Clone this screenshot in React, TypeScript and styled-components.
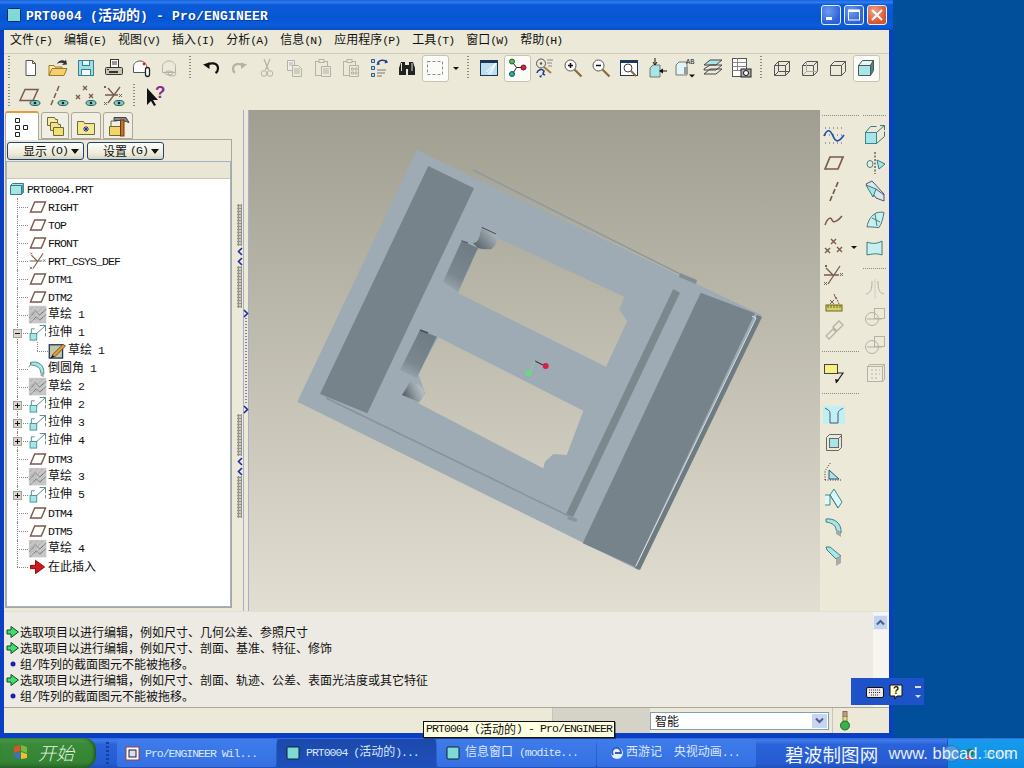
import React from "react";
import styled, { createGlobalStyle } from "styled-components";

const Global = createGlobalStyle`
  html, body { margin: 0; padding: 0; background: #014f9b; overflow: hidden; }
  body { font-family: "Noto Sans CJK SC", "Liberation Sans", sans-serif; font-size: 12px; color: #111; }
  * { box-sizing: border-box; }
`;

const Desktop = styled.div`
  position: relative; width: 1024px; height: 768px; background: #014f9b;
  display: flex; flex-direction: column; overflow: hidden;
`;
const Window = styled.div`
  width: 893px; height: 738px; display: flex; flex-direction: column;
  background: #ece9d8; border: solid #0a3fc4; border-width: 0 4px 5px 4px;
`;
const TitleBar = styled.div`
  height: 30px; margin: 0 -4px; padding: 0 6px 0 7px; display: flex; align-items: center;
  background: linear-gradient(#1a64dc 0, #2c7cf0 8%, #0c5ad8 16%, #0656d2 60%, #0a5cdc 85%, #0a4fc0 100%);
  color: #fff; font-weight: 700; font-size: 14px; line-height: 16px;
  --lat-size: 13px; --lat-ls: 0.2px;
`;
const TitleText = styled.span`margin-left: 5px; white-space: pre; text-shadow: 1px 1px 0 #0a3a9c; flex: 1;`;
const WinButton = styled.div<{ $close?: boolean }>`
  width: 20px; height: 20px; margin-left: 3px; border: 1px solid #e8eefc; border-radius: 3px;
  background: ${(p) => (p.$close ? "radial-gradient(circle at 35% 30%, #f0a48a, #d9532c 70%)" : "radial-gradient(circle at 35% 30%, #6f9cf0, #2b62d8 70%)")};
  display: flex; align-items: center; justify-content: center;
`;
const MenuBar = styled.div`
  height: 24px; display: flex; align-items: center; padding: 0 0 3px 6px; border-bottom: 1px solid #cfccbc;
  white-space: pre;
`;
const MenuItem = styled.span`padding-right: 12px; line-height: 16px;`;
const ToolRow = styled.div`height: 28px; display: flex; align-items: center; margin-left: -1px;`;
const VSep = styled.i`
  width: 2px; height: 24px; margin: 0 6px 0 5px;
  background: repeating-linear-gradient(#8d8b80 0 1px, transparent 1px 3px);
`;
const ToolButton = styled.div`
  width: 28px; height: 28px; display: flex; align-items: center; justify-content: center; flex: none;
`;
const ActiveFace = styled.div`
  width: 27px; height: 27px; display: flex; align-items: center; justify-content: center;
  background: #fbfbf8; border: 1px solid #c6c3b4; border-radius: 3px;
`;
const DropArrow = styled.div<{ $w?: number }>`
  width: ${(p) => p.$w ?? 13}px; height: 28px; display: flex; align-items: center; justify-content: center; flex: none;
  &::after { content: ""; border: 3px solid transparent; border-top: 3px solid #111; border-bottom: 0; }
`;
const Main = styled.div`height: 501px; display: flex;`;
const LeftColumn = styled.div`width: 227px; margin-left: 1px; display: flex; flex-direction: column; flex: none;`;
const Tabs = styled.div`height: 29px; display: flex; gap: 2px; align-items: flex-end;`;
const Tab = styled.div<{ $w: number; $active?: boolean }>`
  width: ${(p) => p.$w}px; height: ${(p) => (p.$active ? 29 : 27)}px; display: flex; align-items: center; justify-content: center;
  margin-bottom: ${(p) => (p.$active ? -1 : 0)}px; position: relative;
  background: ${(p) => (p.$active ? "#fff" : "#f1efe4")};
  border: 1px solid #aca899; border-bottom: ${(p) => (p.$active ? 0 : 1)}px solid #aca899; border-radius: 3px 3px 0 0;
  border-top: ${(p) => (p.$active ? "2px solid #e89a35" : "1px solid #aca899")};
`;
const Panel = styled.div`
  height: 469px; border: 1px solid #aca899; background: #ece9d8; display: flex; flex-direction: column;
`;
const PanelButtons = styled.div`display: flex; gap: 3px; padding: 2px 0 1px 1px; height: 21px;`;
const PanelButton = styled.div`
  width: 77px; height: 18px; display: flex; align-items: center; justify-content: flex-end; gap: 3px; padding: 0 4px 2px 0;
  border: 1px solid #24456b; border-radius: 3px; background: linear-gradient(#fdfdfb, #ece9d8 70%, #d6d2c0); white-space: pre;
  &::after { content: ""; border: 4px solid transparent; border-top: 5px solid #111; border-bottom: 0; margin-top: 2px; }
`;
const TreeBox = styled.div`flex: 1; border: 1px solid #9fb3c4; display: flex; flex-direction: column;`;
const TreeHeader = styled.div`height: 17px; background: #e9e6d6; border-bottom: 1px solid #c9c6b6;`;
const Tree = styled.div`flex: 1; background: #fff; padding-top: 1px;`;
const TreeRowBox = styled.div<{ $level: number; $last?: boolean; $root?: boolean }>`
  position: relative; height: 18px; display: flex; align-items: center; white-space: pre;
  padding-left: ${(p) => (p.$root ? 1 : p.$level * 20)}px;
  &::before {
    content: ${(p) => (p.$root ? "none" : '""')}; position: absolute; left: 10px; top: 0;
    height: ${(p) => (p.$last ? "9px" : "18px")}; border-left: 1px dotted #888;
  }
`;
const TreeLabel = styled.span<{ $cjk: boolean }>`line-height: 16px; padding-bottom: ${(p) => (p.$cjk ? 3 : 1)}px;`;
const Gutter = styled.span<{ $child?: boolean }>`
  position: relative; width: 22px; height: 18px; flex: none;
  &::before { content: ""; position: absolute; left: 10px; right: 1px; top: 9px; border-top: 1px dotted #888; }
  &::after {
    content: ${(p) => (p.$child ? '""' : "none")}; position: absolute; left: 10px; top: 0; height: 9px; border-left: 1px dotted #888;
  }
`;
const Expander = styled.span`
  position: absolute; left: 6px; top: 5px; width: 9px; height: 9px; z-index: 1; background: #d8d6cf; border: 1px solid #a5a298;
  &::before { content: ""; position: absolute; left: 1px; top: 3px; width: 5px; height: 1px; background: #111; }
`;
const ExpanderPlus = styled(Expander)`
  &::after { content: ""; position: absolute; left: 3px; top: 1px; width: 1px; height: 5px; background: #111; }
`;
const TreeIcon = styled.span`width: 17px; height: 18px; flex: none; display: flex; align-items: center; justify-content: center; margin-right: 2px;`;
const Sash = styled.div`width: 17px; flex: none; display: flex; padding-left: 4px;`;
const GripColumn = styled.div`width: 7px; margin-right: 0; display: flex; flex-direction: column; align-items: center; padding-top: 94px;`;
const Grip = styled.div`
  width: 5px; height: 42px; background-color: #cfccc0;
  background-image: radial-gradient(#96948a 1px, transparent 1.2px); background-size: 3px 3px;
`;
const Chevron = styled.span`
  height: 10px; width: 7px; display: flex; align-items: center; justify-content: center; flex: none;
`;
const GripGap = styled.div`height: 106px;`;
const LineColumn = styled.div`
  width: 6px; border-left: 1px solid #a9aecb; border-right: 1px solid #a9aecb; display: flex; flex-direction: column; align-items: center; padding-top: 198px;
`;
const DotLine = styled.div`
  width: 2px; height: 86px; background: repeating-linear-gradient(#7b7fa8 0 1px, transparent 1px 3px);
`;
const Canvas = styled.div`
  flex: none; width: 571px; height: 501px;
  background: linear-gradient(#a09e90, #e2dfd2);
`;
const ModelSvg = styled.svg`display: block; width: 100%; height: 100%;`;
const SideBar = styled.div`flex: 1; display: flex; background: #ece9d8;`;
const SideCol = styled.div<{ $w: number }>`width: ${(p) => p.$w}px; display: flex; flex-direction: column;`;
const SideRow = styled.div`height: 28px; display: flex; align-items: center;`;
const HSep = styled.div<{ $h: number }>`
  height: ${(p) => p.$h}px; flex: none; display: flex; align-items: center; padding: 0 2px;
  &::after { content: ""; width: 100%; height: 1px; background: repeating-linear-gradient(90deg, #8d8b80 0 1px, transparent 1px 2px); }
`;
const MessageArea = styled.div`height: 96px; display: flex; background: #eceae2; border-top: 1px solid #e3e0d3;`;
const Messages = styled.div`flex: 1; padding-top: 12px;`;
const MessageLine = styled.div`height: 16px; display: flex; align-items: center; white-space: pre; padding-left: 2px; line-height: 16px;`;
const MessageIcon = styled.span`width: 14px; height: 16px; flex: none; display: flex; align-items: center; justify-content: center;`;
const ScrollTrack = styled.div`width: 16px; background: #f6f5ef; padding-top: 3px;`;
const ScrollUp = styled.div`
  width: 15px; height: 15px; background: #c3d3f0; border: 1px solid #e8eefb; display: flex; align-items: center; justify-content: center;
`;
const StatusBar = styled.div`height: 26px; display: flex; align-items: center; border-top: 1px solid #aca899;`;
const StatusBlank = styled.div`width: 549px; height: 100%; border-right: 1px solid #c8c5b5;`;
const StatusGrey = styled.div`width: 97px; height: 100%; background: #d5d2c8;`;
const Combo = styled.div`
  width: 179px; height: 18px; display: flex; align-items: center; justify-content: space-between; padding: 0 1px 0 4px;
  background: #fff; border: 1px solid #7f9db9; line-height: 16px;
`;
const ComboArrow = styled.span`
  width: 15px; height: 14px; background: #c5d5f2; display: flex; align-items: center; justify-content: center; border-radius: 1px;
`;
const StatusSep = styled.i`width: 1px; height: 100%; margin-left: 3px; background: #c8c5b5;`;
const Light = styled.div`width: 24px; display: flex; justify-content: center;`;

const Taskbar = styled.div`
  height: 30px; display: flex; align-items: stretch; position: relative;
  background: linear-gradient(#2f68dc 0, #3f7bea 8%, #2a62d9 22%, #265cd2 85%, #1f4fb8 100%);
`;
const StartButton = styled.div`
  width: 96px; display: flex; align-items: center; padding: 0 0 2px 11px; gap: 7px; border-radius: 0 12px 12px 0;
  background: linear-gradient(#4c9a4c, #3a8a3a 20%, #348434 80%, #2a6a2a);
  color: #e9f5e4; font-style: italic; font-size: 18px; font-weight: 300; box-shadow: inset -2px 0 3px #1f5a1f;
`;
const TaskGrip = styled.i`
  width: 3px; margin: 4px 8px 4px 10px;
  background: repeating-linear-gradient(#173f9c 0 2px, transparent 2px 4px);
`;
const TaskButton = styled.div<{ $active?: boolean; $w: number; $pad: number; $gap: number }>`
  width: ${(p) => p.$w}px; margin: 1px 1px 1px 0; padding-left: ${(p) => p.$pad}px; gap: ${(p) => p.$gap}px;
  display: flex; align-items: center; white-space: pre; border-radius: 2px; overflow: hidden;
  color: #dbe6ff; --lat-ls: -1px;
  background: ${(p) => (p.$active ? "linear-gradient(#1c49ac, #1e50ba)" : "linear-gradient(#3f7cea, #3470e2)")};
`;
const TaskLabel = styled.span<{ $cjk?: boolean }>`line-height: 16px; padding-bottom: ${(p) => (p.$cjk ? 3 : 1)}px;`;
const Tray = styled.div`
  position: absolute; right: 0; top: 1px; bottom: 0; width: 77px; padding: 0 14px 0 0;
  display: flex; justify-content: space-between; align-items: center;
  background: linear-gradient(#189bec, #0e8ce4); color: #8fcff6; font-size: 11px;
  font-family: "Liberation Sans", sans-serif; border-left: 1px solid #0a5fb8;
`;
const TrayIcons = styled.span`display: flex; align-items: center; gap: 3px; margin-left: -5px;`;
const Watermark = styled.div`
  position: absolute; left: 785px; top: 2px; height: 27px; display: flex; align-items: center; color: #f2f5fb; white-space: pre;
`;
const WatermarkCn = styled.span`font-size: 18.5px; letter-spacing: 0.2px; margin-right: 10px; font-weight: 400;`;
const WatermarkEn = styled.span`font-family: "Liberation Sans", sans-serif; font-size: 16.5px; color: #e8edf6;`;
const Tooltip = styled.div`
  position: absolute; left: 423px; top: 721px; width: 192px; height: 17px; background: #ffffe1; border: 1px solid #111;
  display: flex; align-items: center; padding: 0 0 2px 2px; white-space: pre; z-index: 5; box-shadow: 1px 1px 0 #0006; line-height: 15px;
`;
const ImeBar = styled.div`
  position: absolute; left: 851px; top: 678px; width: 73px; height: 27px; z-index: 5; background: #1d52c9;
  display: flex; align-items: center;
`;
const ImeGrip = styled.i`
  width: 3px; height: 21px; margin: 0 11px 0 3px; background: repeating-linear-gradient(#0e2f8a 0 2px, transparent 2px 4px);
`;
const ImeSlot = styled.span<{ $w: number }>`width: ${(p) => p.$w}px; display: flex; justify-content: center; flex: none;`;

const Lat = styled.span`
  font-family: "Liberation Mono", monospace; font-size: var(--lat-size, 11.5px); letter-spacing: var(--lat-ls, -0.9px);
`;
const Ico = styled.svg`display: block; flex: none;`;

function T({ s }: { s: string }) {
  const parts = s.split(/([\x00-\x7f]+)/).filter(Boolean);
  return (
    <>
      {parts.map((p, i) => (/^[\x00-\x7f]/.test(p) ? <Lat key={i}>{p}</Lat> : <span key={i}>{p}</span>))}
    </>
  );
}

const B = "#7c5a49";
const Gy = "#b4b1a6";
const Cy = "#a6e6e8";
const HatchDefs = () => null;
const I: Record<string, React.ReactNode> = {
  new: <><path d="M8 4.500h6.500l3 3v12h-9.500z" fill="#fff" stroke="#555" /><path d="M14.500 4.500v3h3" stroke="#555" /></>,
  open: <><path d="M3 19.500v-10h5l1 1.500h7v2" fill="#fbe9a8" stroke="#9a7a20" /><path d="M3 19.500l3-7h15l-3 7z" fill="#f6cf6c" stroke="#9a7a20" /><path d="M11 8c1-3 5-5 8-3l1-1.500 1 5-5 .5 1.800-1.800c-2-1-5-.5-6.800.8z" fill="#333" /></>,
  save: <><rect x="4.500" y="4.500" width="15" height="15" fill="#9adfe4" stroke="#3a7f9a" /><rect x="8.500" y="4.500" width="7" height="5" fill="#e8f8f8" stroke="#3a7f9a" /><rect x="7.500" y="13.500" width="9" height="6" fill="#f4fbfb" stroke="#3a7f9a" /></>,
  print: <><rect x="8.500" y="3.500" width="8" height="8" fill="#fff" stroke="#333" /><path d="M10 6h5M10 8h5" stroke="#333" /><rect x="3.500" y="11.500" width="17" height="7" rx="1" fill="#c9c6b8" stroke="#333" /><rect x="7" y="15" width="9" height="2" fill="#333" /><rect x="5" y="13" width="2" height="1" fill="#333" /></>,
  mail: <><path d="M3.500 16.500v-6c0-3 3-5.500 6.500-5.500 3.500 0 6.500 2.500 6.500 5.500v6z" fill="#fff" stroke="#555" /><circle cx="14" cy="8" r="1.400" fill="#d22" /><rect x="15.500" y="11.500" width="4" height="9" rx="2" fill="#fff" stroke="#222" strokeWidth="1.300" /></>,
  maild: <><path d="M4.500 16.500v-6c0-3 3-5.500 6.500-5.500 3.500 0 6.500 2.500 6.500 5.500v6z" stroke={Gy} /><ellipse cx="14" cy="18" rx="4" ry="2" stroke={Gy} /><ellipse cx="11" cy="17" rx="4" ry="2" stroke={Gy} /></>,
  undo: <><path d="M7 9.500c4-3.500 12-3 12 3 0 2-1 3.500-2.500 4.500" stroke="#111" strokeWidth="2.200" /><path d="M4 8.500l6.500-2v6.500z" fill="#111" /></>,
  redo: <><path d="M17 10c-4-3-11-3-11 3 0 1.500.7 2.800 2 3.800" stroke={Gy} strokeWidth="2.200" /><path d="M20 8.500l-6-2v6.500z" fill={Gy} /></>,
  cut: <><path d="M9 3l4.500 11M15 3l-4.500 11" stroke={Gy} strokeWidth="1.200" /><circle cx="9" cy="17.500" r="2.800" stroke={Gy} /><circle cx="15" cy="17.500" r="2.800" stroke={Gy} /></>,
  copy: <><path d="M4.500 4.500h7v10h-7z" fill="#eee" stroke={Gy} /><path d="M6 7h4M6 9h4" stroke={Gy} /><path d="M9.500 9.500h6l3 3v8h-9z" fill="#ece9d8" stroke={Gy} /><path d="M11 13h6M11 15h6M11 17h6" stroke={Gy} /></>,
  paste: <><rect x="4.500" y="5.500" width="12" height="14" stroke={Gy} /><rect x="8" y="3.500" width="5" height="3" fill="#ece9d8" stroke={Gy} /><path d="M10.500 10.500h9v10h-9z" fill="#ece9d8" stroke={Gy} /><path d="M12 13h6M12 15h6M12 17h6" stroke={Gy} /></>,
  pastes: <><rect x="4.500" y="5.500" width="12" height="14" stroke={Gy} /><rect x="8" y="3.500" width="5" height="3" fill="#ece9d8" stroke={Gy} /><path d="M10.500 9.500h9v11h-9z" fill="#ece9d8" stroke={Gy} /><path d="M12.500 12h2v2h-2zM16 12h2v2h-2zM12.500 16h2v2h-2zM16 16h2v2h-2z" stroke={Gy} /></>,
  regen: <><path d="M4.500 3.500h3v3h-3zM4.500 10.500h3v3h-3zM4.500 17.500h3v3h-3z" fill={Cy} stroke="#2a5a8a" /><path d="M10 14h9M10 17h8M10 20h5" stroke="#777" /><path d="M11 7c1-3 6-4 9-1" stroke="#1d3e8c" strokeWidth="1.500" /><path d="M19 3.500l2 3-3.500 1zM11 5l-1.500 4 3.500-.5z" fill="#1d3e8c" /></>,
  find: <><path d="M4 12l2-6h4v3h4v-3h4l2 6v7h-7v-6h-2v6h-7z" fill="#222" /><path d="M6.500 7v8M17 7v8" stroke="#ddd" /></>,
  box: <path d="M4.500 5.500h15v13h-15z" stroke="#8d8c86" strokeDasharray="3 2" />,
  view: <><rect x="3.500" y="4.500" width="17" height="15" fill="#bcdff0" stroke="#1d3558" /><rect x="3" y="4" width="18" height="3" fill="#1d3558" /><path d="M19 7l-8 11M19 7l-10 9M19 7l-6 12" stroke="#fff" /></>,
  csysv: <><circle cx="7" cy="5.500" r="2.500" fill="#58b85a" stroke="#2a5a3a" /><circle cx="7" cy="18" r="2.500" fill="#38a8a0" stroke="#1a5a5a" /><circle cx="18.500" cy="11.500" r="2.500" fill="#c82640" stroke="#701a2a" /><path d="M8.500 7.500l3 4-3 5M11.500 11.500h5" stroke="#222" /></>,
  spin: <><circle cx="8" cy="7.500" r="4.500" stroke="#555" /><circle cx="8" cy="7.500" r="1.200" fill="#555" /><path d="M14 4h6M14 7h5M15 10h4" stroke="#888" /><path d="M11 11l7 6" stroke="#a67c3c" strokeWidth="2" /><path d="M4 17a4 4 0 0 1 7-2l-1 3 2 1" stroke="#1d3e8c" strokeWidth="1.600" /><path d="M6 20l2 2 1-3z" fill="#1d3e8c" /></>,
  zin: <><circle cx="9.500" cy="9.500" r="5.500" fill="#fff" stroke="#555" /><path d="M7 9.500h5M9.500 7v5" stroke="#111" strokeWidth="1.500" /><path d="M13.500 13.500l7 7" stroke="#8a6a3a" strokeWidth="2.200" /></>,
  zout: <><circle cx="9.500" cy="9.500" r="5.500" fill="#fff" stroke="#555" /><path d="M7 9.500h5" stroke="#111" strokeWidth="1.500" /><path d="M13.500 13.500l7 7" stroke="#8a6a3a" strokeWidth="2.200" /></>,
  refit: <><rect x="3.500" y="4.500" width="17" height="15" fill="#fff" stroke="#1d3558" /><rect x="3" y="4" width="18" height="3" fill="#1d3558" /><circle cx="11" cy="12" r="4" stroke="#444" /><path d="M14 15l5 5" stroke="#8a6a3a" strokeWidth="2" /></>,
  orient: <><path d="M5 21v-9l3-3h7v12z" fill={Cy} stroke="#777" /><path d="M10 2v6M8 6l2 3 2-3" stroke="#111" /><path d="M15 15h7" stroke="#111" /><path d="M14 15l4-2.500v5z" fill="#111" /></>,
  saved: <><path d="M3 19v-10l3-3h8v13z" fill="#e2f6f6" stroke="#777" /><rect x="11" y="11" width="4" height="7" fill="#999" /><text x="13" y="8" fontSize="7" fontFamily="Liberation Mono" fill="#222">AB</text><path d="M16 18.500h6l-3 3z" fill="#111" /></>,
  layers: <><path d="M3 9l6-5h12l-6 5z" fill={Cy} stroke="#444" /><path d="M3 13l6-4h12l-6 5h-12zM3 18l6-5h12l-6 5z" stroke="#444" /></>,
  setup: <><rect x="3.500" y="2.500" width="14" height="18" fill="#fff" stroke="#555" /><path d="M3.500 6.500h14M3.500 10.500h14M3.500 14.500h10M8.500 2.500v12" stroke="#888" /><rect x="12" y="13" width="10" height="8" fill="#aaa" stroke="#222" /><circle cx="17" cy="17" r="2.500" fill="#fff" stroke="#111" /></>,
  cube1: <><path d="M4.500 9.500h11v10h-11zM8.500 5.500h11v10h-11zM4.500 9.500l4-4M15.500 9.500l4-4M4.500 19.500l4-4M15.500 19.500l4-4" stroke="#555" /></>,
  cube2: <><path d="M4.500 9.500h11v10h-11zM15.500 9.500l4-4v10l-4 4M4.500 9.500l4-4h11" stroke="#555" /><path d="M8.500 5.500v10h11M4.500 19.500l4-4" stroke="#aaa" /></>,
  cube3: <><path d="M4.500 9.500h11v10h-11zM15.500 9.500l4-4v10l-4 4M4.500 9.500l4-4h11" stroke="#555" /></>,
  cube4: <><path d="M4.500 9.500h12v10h-12z" fill={Cy} stroke="#555" /><path d="M4.500 9.500l4-5h11l-3 5z" fill="#dff7f7" stroke="#555" /><path d="M16.500 9.500l3-5v10l-3 5z" fill="#3f8f80" stroke="#555" /></>,
  planev: <><path d="M2 16.500l5-11h13l-5 11z" stroke={B} strokeWidth="1.500" /><ellipse cx="17" cy="19" rx="5" ry="2.500" fill="#7fd0c0" stroke="#2a5a5a" /><circle cx="17" cy="19" r="1.300" fill="#123" /></>,
  axisv: <><path d="M13 2l-2 5M10 9l-2 5M7 16l-2 5" stroke={B} strokeWidth="1.500" /><ellipse cx="17" cy="19" rx="5" ry="2.500" fill="#7fd0c0" stroke="#2a5a5a" /><circle cx="17" cy="19" r="1.300" fill="#123" /></>,
  pointv: <><path d="M9 2l4 4M13 2l-4 4M2 11l4 4M6 11l-4 4M15 10l4 4M19 10l-4 4" stroke={B} strokeWidth="1.300" /><ellipse cx="17" cy="19" rx="5" ry="2.500" fill="#7fd0c0" stroke="#2a5a5a" /><circle cx="17" cy="19" r="1.300" fill="#123" /></>,
  csysvv: <><path d="M6 4l6 7M18 3l-6 8-6 8M3 11h13" stroke={B} strokeWidth="1.300" /><path d="M17 10l3 3M20 10l-3 3M2 2l2 2M4 2l-2 2M2 18l3 3M5 18l-3 3" stroke="#666" /><ellipse cx="17" cy="19" rx="5" ry="2.500" fill="#7fd0c0" stroke="#2a5a5a" /><circle cx="17" cy="19" r="1.300" fill="#123" /></>,
  help: <><path d="M4 4l0 17 4-4 3 5 2-1-3-5 5 0z" fill="#111" /><text x="12" y="14" fontSize="17" fontWeight="700" fill="#8a2a8a" fontFamily="Liberation Sans">?</text></>,
  tabtree: <><path d="M5.500 3.500h4v4h-4zM5.500 10.500h4v4h-4zM5.500 17.500h4v4h-4zM13.500 10.500h4v4h-4z" fill="#fff" stroke="#222" /></>,
  tabfold: <><path d="M4.500 3.500h7l1 2h2v6h-10z" fill="#fbe9a8" stroke="#6a6a40" /><path d="M7.500 8.500h7l1 2h2v6h-10z" fill="#f6e08a" stroke="#6a6a40" /><path d="M10.500 13.500h10v8h-10z" fill="#f3e070" stroke="#6a6a40" /></>,
  tabfav: <><path d="M3.500 7.500h6l1 2h10v11h-17z" fill="#f5e690" stroke="#6a6a40" /><path d="M12 12v6M9 15h6M10 13l4 4M14 13l-4 4" stroke="#1d2e9c" /></>,
  tabtool: <><path d="M3.500 12.500h13v9h-13z" fill="#f3d665" stroke="#6a6a40" /><path d="M5 12V7h6" stroke="#6a6a40" /><path d="M8 3.500h12l3 5-6-2h-9z" fill="#888" stroke="#444" /><rect x="14.500" y="6" width="3.500" height="16" fill="#c4742a" stroke="#6a3a10" /></>,
  plane: <path d="M3 18l5-12h13l-5 12z" stroke={B} strokeWidth="1.700" />,
  csys: <><path d="M4 5l7 7M18 3l-6 9-6 9M2 12h15" stroke={B} strokeWidth="1.300" /><path d="M3 2l2 2M5 2l-2 2M2 19l3 3M5 19l-3 3M18 10l3 3M21 10l-3 3" stroke="#666" /></>,
  sketch: <><rect x="1" y="1" width="21" height="21" fill="#c6c6c6" /><path d="M2 6l4-4M2 12l10-10M3 17l15-15M8 18l13-13M14 19l7-7" stroke="#8e8e8e" strokeDasharray="1 1" /><path d="M2 15l7-8 5 5 8-7M3 21l7-7 4 4 7-6" stroke="#333" strokeDasharray="1 1" /></>,
  extrude: <><rect x="2.500" y="12.500" width="8" height="8" fill={Cy} stroke="#3a8a8a" /><path d="M4 12V7h4M14 3h7v7M10 13L21 3M21 12v4" stroke="#3a7a7a" /></>,
  sketchE: <><rect x="1.500" y="4.500" width="16" height="16" fill="#bfc7a8" stroke="#1d2e5a" strokeWidth="1.500" /><path d="M5 17l13-13 3 2-13 13z" fill="#e8a03a" stroke="#5a3a10" /><path d="M3 21l2-4 3 2z" fill="#111" /></>,
  round: <><path d="M3 4c9-2 17 3 16 14l-4-2c0-5-3-8-12-9z" fill={Cy} stroke="#3a7a7a" /><path d="M1 10l3-5" stroke="#777" /><path d="M15 16l4 2 0 4-4-2z" fill="#aaa" /></>,
  insert: <path d="M3 10h6V4l11 8-11 8v-6H3z" fill="#d01820" stroke="#700" />,
  wave: <><path d="M3 5h18M3 20h18M3 12h18" stroke="#556" strokeDasharray="1 3" /><path d="M2 13c3-7 6-7 9 0s6 6 11-1" stroke="#2050b0" strokeWidth="1.700" /></>,
  axis: <path d="M16 3l-2 5M13 10l-2 5M10 17l-2 5" stroke={B} strokeWidth="1.700" />,
  curve: <path d="M3 18c3-8 6-8 7-5s5 2 10-4" stroke={B} strokeWidth="1.500" />,
  points: <path d="M9 4l5 5M14 4l-5 5M3 13l5 5M8 13l-5 5M15 12l5 5M20 12l-5 5" stroke={B} strokeWidth="1.400" />,
  offset: <><path d="M12 3l2 5M8 9l4 4M12 9l-4 4" stroke={B} /><path d="M14 6l3 7" stroke={B} strokeDasharray="2 1" /><rect x="4" y="14" width="16" height="6" fill="#d8d060" stroke="#6a6a20" /><path d="M6 14v3M9 14v3M12 14v3M15 14v3M18 14v3" stroke="#6a6a20" /></>,
  chain: <path d="M4 17l7-7 3 3-7 7zM11 8l6-6 4 4-6 6z" stroke={Gy} strokeWidth="1.300" />,
  note: <><rect x="2.500" y="4.500" width="13" height="9" fill="#f8f080" stroke="#444" /><path d="M15 13h6l-7 10" stroke="#222" strokeWidth="1.200" /><path d="M14 23l-1-4 4 1z" fill="#111" /></>,
  extr2: <><rect x="2.500" y="9.500" width="11" height="11" fill={Cy} stroke="#3a8a8a" /><path d="M2.500 9.500l5-6h6M13.500 9.500l8-7M13.500 20.500l8-7v-5M17 2.500h4.500v4.500" stroke="#3a7a7a" /></>,
  revolve: <><path d="M12 1v22" stroke="#222" strokeDasharray="2 1.500" /><ellipse cx="7" cy="13" rx="3" ry="3.500" stroke="#3a8a8a" /><path d="M14 9l8 4-6 5z" fill={Cy} stroke="#3a7a7a" /></>,
  sweep: <><path d="M3 5l6-3 12 13v7l-8-3z" fill="#d8e8ee" stroke="#556" /><path d="M3 6l10 4-3 8z" fill={Cy} stroke="#3a7a7a" /><path d="M13 10l8 6" stroke="#556" /></>,
  blend: <><path d="M4 20c1-7 5-12 9-14 3-1 6-1 8-.5-1 5-2 11-5 15-4 0-8-1-12-.5z" fill="#c7eef0" stroke="#4a7a7a" /><path d="M9 11l8 4M12 7l2 12" stroke="#4a7a7a" /></>,
  bound: <path d="M4 7c5 2 10 2 15-1v14c-5-2-10-1-15 0z" fill="#c7eef0" stroke="#3a7a7a" />,
  mirror: <><path d="M12 2v20" stroke="#ccc" /><path d="M9 4c0 8-1 12-6 13M15 4c0 8 1 12 6 13" stroke={Gy} /></>,
  merge: <><rect x="11.500" y="3.500" width="10" height="10" stroke={Gy} /><circle cx="9" cy="14" r="6.500" stroke={Gy} /><path d="M4 14h15" stroke={Gy} /></>,
  pattern: <><rect x="4.500" y="5.500" width="15" height="15" stroke={Gy} fill="#eeebdd" /><path d="M19.500 5.500l2-2h-15l-2 2M19.500 20.500l2-2v-15" stroke={Gy} /><path d="M8 9h2M12 9h2M16 9h1M8 13h2M12 13h2M16 13h1M8 17h2M12 17h2" stroke={Gy} /></>,
  uhole: <><rect x="1" y="3" width="22" height="18" fill="#bff0f4" /><path d="M3 5c3 2 5 2 5 6v9h8v-9c0-4 3-4 5-6" stroke="#556" fill="none" /></>,
  shell: <><path d="M4.500 6.500l3-3h12v13l-3 3h-12z" stroke="#666" /><rect x="7.500" y="7.500" width="9" height="9" fill={Cy} stroke="#666" /><path d="M16.500 7.500l3-3" stroke="#666" /></>,
  draft: <><path d="M3 21h16M3 21v-9l6-9" stroke="#333" strokeDasharray="1 1.500" /><path d="M7 11l10 9h-10z" fill={Cy} stroke="#356" /></>,
  rib: <><path d="M3 8h5v10h-5M8 8l4-6 8 13-4 6z" fill="#dff7f7" stroke="#3a8a8a" /><path d="M8 8l8 13" stroke="#3a8a8a" /></>,
  fillet: <><path d="M4 4c8-1 16 4 15 14l-5-3c0-4-3-7-10-8z" fill={Cy} stroke="#4a7a7a" /><path d="M14 15l5 3v4l-5-3z" fill="#aaa" /></>,
  chamfer: <><path d="M4 4h4l11 9-5 3-9-9z" fill={Cy} stroke="#4a7a7a" /><path d="M14 16l5-3v7l-5 3z" fill="#aaa" /></>,
};

function Icon({ n, size = 24 }: { n: string; size?: number }) {
  return <Ico width={size} height={size} viewBox="0 0 24 24" fill="none">{I[n]}</Ico>;
}
const Tool = ({ n, active }: { n: string; active?: boolean }) => (
  <ToolButton>{active ? <ActiveFace><Icon n={n} /></ActiveFace> : <Icon n={n} />}</ToolButton>
);
const SChev = ({ right }: { right?: boolean }) => (
  <Chevron>
    <Ico width="6" height="9" viewBox="0 0 6 9" fill="none">
      <path d={right ? "M1 1l3.500 3.500-3.500 3.500" : "M5 1L1.500 4.500 5 8"} stroke="#1c2f9c" strokeWidth="1.600" />
    </Ico>
  </Chevron>
);

type Row = { t: string; i: string; lvl?: number; ex?: "p" | "m" };
const rows: Row[] = [
  { t: "RIGHT", i: "plane" }, { t: "TOP", i: "plane" }, { t: "FRONT", i: "plane" }, { t: "PRT_CSYS_DEF", i: "csys" },
  { t: "DTM1", i: "plane" }, { t: "DTM2", i: "plane" }, { t: "草绘 1", i: "sketch" },
  { t: "拉伸 1", i: "extrude", ex: "m" }, { t: "草绘 1", i: "sketchE", lvl: 1 }, { t: "倒圆角 1", i: "round" },
  { t: "草绘 2", i: "sketch" }, { t: "拉伸 2", i: "extrude", ex: "p" }, { t: "拉伸 3", i: "extrude", ex: "p" },
  { t: "拉伸 4", i: "extrude", ex: "p" }, { t: "DTM3", i: "plane" }, { t: "草绘 3", i: "sketch" },
  { t: "拉伸 5", i: "extrude", ex: "p" }, { t: "DTM4", i: "plane" }, { t: "DTM5", i: "plane" },
  { t: "草绘 4", i: "sketch" }, { t: "在此插入", i: "insert" },
];
const menus = ["文件(F)", "编辑(E)", "视图(V)", "插入(I)", "分析(A)", "信息(N)", "应用程序(P)", "工具(T)", "窗口(W)", "帮助(H)"];
const msg1 = "选取项目以进行编辑，例如尺寸、几何公差、参照尺寸";
const msg2 = "选取项目以进行编辑，例如尺寸、剖面、基准、特征、修饰";
const msg3 = "组/阵列的截面图元不能被拖移。";
const msg4 = "选取项目以进行编辑，例如尺寸、剖面、轨迹、公差、表面光洁度或其它特征";
const messages: [boolean, string][] = [[true, msg1], [true, msg2], [false, msg3], [true, msg4], [false, msg3]];

const GreenArrow = () => (
  <Ico width="14" height="14" viewBox="0 0 14 14">
    <path d="M1 5h1l0 0 3 0V1.500L12.500 7 5 12.500V9H1z" fill="#3ee06a" stroke="#0c4a2a" />
  </Ico>
);
const BlueDot = () => (
  <Ico width="6" height="6" viewBox="0 0 6 6"><circle cx="3" cy="3" r="2.500" fill="#1420b0" /></Ico>
);
const TaskCube = () => (
  <Ico width="14" height="14" viewBox="0 0 14 14">
    <rect x="1" y="1" width="12" height="12" rx="1" fill="#7fdad6" stroke="#123" />
  </Ico>
);

function Model() {
  const plate =
    "M416.700 150L761.700 315L638.300 570L297.300 401.700Z " +
    "M498.300 238.300L624.300 296.700L619.300 310L627.300 321L606 366.700L458.300 293.300L476.700 250L490 248.300Z " +
    "M438.300 337.300L583.300 410.700L566.700 455L553.300 454L545 461.700L543.300 468.300L418.300 403.300L425 393.300L418.300 373.300Z";
  return (
    <ModelSvg viewBox="249 110 571 501">
      <defs>
        <linearGradient id="cyl" x1="0" y1="1" x2="1" y2="0.200">
          <stop offset="0" stopColor="#4e585e" />
          <stop offset="0.500" stopColor="#7e8a91" />
          <stop offset="1" stopColor="#b5bdc3" />
        </linearGradient>
        <linearGradient id="cyl2" x1="0" y1="0.700" x2="1" y2="0.300">
          <stop offset="0" stopColor="#4e585e" />
          <stop offset="0.600" stopColor="#97a2a9" />
          <stop offset="1" stopColor="#bfc7cc" />
        </linearGradient>
        <linearGradient id="wall" x1="0.700" y1="0" x2="0.300" y2="1">
          <stop offset="0" stopColor="#6f7b82" />
          <stop offset="0.700" stopColor="#7b878e" />
          <stop offset="1" stopColor="#9aa6ae" />
        </linearGradient>
      </defs>
      <path d={plate} fill="#9eabb4" fillRule="evenodd" />
      <path d="M428.300 166L474 188.300L367.300 413.300L320 394Z" fill="#77838a" />
      <path d="M700.700 292.700L755 313.300L635 566.700L582.700 543.300Z" fill="#77838a" />
      <path d="M757 315L762 317L640 570L635 568Z" fill="#6f7b82" />
      <path d="M752 316L756 318L636 566" stroke="#dfe4e6" strokeWidth="1" fill="none" />
      <path d="M673.300 289L680 292.700L573.300 516.700L566 514Z" fill="#7b888e" />
      <path d="M461.700 240.700L478 248L458 291.700L443 281.700Z" fill="url(#wall)" />
      <path d="M420 330L436.700 336.700L416.700 378.300L400 370Z" fill="url(#wall)" />
      <path d="M481.700 227.300L496 234Q499 243 491.700 249Q484 250 478 248L473 243Q477 243 479 238Z" fill="url(#cyl)" />
      <path d="M481.700 227.300L496 234M461.700 240.700L468 243" stroke="#454e54" strokeWidth="1" fill="none" />
      <path d="M420 330L428 333" stroke="#454e54" strokeWidth="1.500" fill="none" />
      <path d="M410 382Q424 384 424 394Q422 400 419 402L402 395Z" fill="url(#cyl2)" />
      <path d="M473 170L696 282" stroke="#8d9aa3" strokeWidth="1.500" />
      <path d="M680 273L697 280L696 284L679 277Z" fill="#828e96" />
      <path d="M326 398L577 520" stroke="#86939b" strokeWidth="1.500" />
      <path d="M568 517L577 520L576 522L567 519Z" fill="#86939b" />
      <path d="M535 361L545 366" stroke="#222" strokeWidth="1" />
      <path d="M535 361L529 373" stroke="#8fd08f" strokeWidth="1" />
      <circle cx="545.700" cy="366" r="3" fill="#d81f44" />
      <circle cx="528.700" cy="373.300" r="3" fill="#5fe07a" />
    </ModelSvg>
  );
}

export default function App() {
  return (
    <Desktop>
      <Global />
      <HatchDefs />
      <Window>
        <TitleBar>
          <Ico width="14" height="14" viewBox="0 0 14 14">
            <rect x="0.500" y="0.500" width="13" height="13" rx="1" fill="#7fdad6" stroke="#0a2a6a" />
          </Ico>
          <TitleText><T s="PRT0004 (" />活动的<T s=") - Pro/ENGINEER" /></TitleText>
          <WinButton>
            <Ico width="14" height="14" viewBox="0 0 14 14"><rect x="2" y="9" width="6" height="3" fill="#fff" /></Ico>
          </WinButton>
          <WinButton>
            <Ico width="14" height="14" viewBox="0 0 14 14"><rect x="1.500" y="2" width="11" height="10" fill="none" stroke="#fff" /><rect x="1.500" y="2" width="11" height="2" fill="#fff" /></Ico>
          </WinButton>
          <WinButton $close>
            <Ico width="14" height="14" viewBox="0 0 14 14"><path d="M2 2l10 10M12 2L2 12" stroke="#fff" strokeWidth="2" /></Ico>
          </WinButton>
        </TitleBar>
        <MenuBar>
          {menus.map((m) => <MenuItem key={m}><T s={m} /></MenuItem>)}
        </MenuBar>
        <ToolRow>
          <VSep />
          {["new", "open", "save", "print", "mail", "maild"].map((n) => <Tool key={n} n={n} />)}
          <VSep />
          {["undo", "redo", "cut", "copy", "paste", "pastes", "regen", "find"].map((n) => <Tool key={n} n={n} />)}
          <Tool n="box" active />
          <DropArrow />
          <VSep />
          <Tool n="view" />
          <Tool n="csysv" active />
          {["spin", "zin", "zout", "refit", "orient", "saved", "layers", "setup"].map((n) => <Tool key={n} n={n} />)}
          <VSep />
          {["cube1", "cube2", "cube3"].map((n) => <Tool key={n} n={n} />)}
          <Tool n="cube4" active />
        </ToolRow>
        <ToolRow>
          <VSep />
          {["planev", "axisv", "pointv", "csysvv"].map((n) => <Tool key={n} n={n} />)}
          <VSep />
          <Tool n="help" />
        </ToolRow>
        <Main>
          <LeftColumn>
            <Tabs>
              <Tab $w={34} $active><Icon n="tabtree" /></Tab>
              <Tab $w={28}><Icon n="tabfold" /></Tab>
              <Tab $w={30}><Icon n="tabfav" /></Tab>
              <Tab $w={30}><Icon n="tabtool" /></Tab>
            </Tabs>
            <Panel>
              <PanelButtons>
                <PanelButton><T s="显示(O)" /></PanelButton>
                <PanelButton><T s="设置(G)" /></PanelButton>
              </PanelButtons>
              <TreeBox>
                <TreeHeader />
                <Tree>
                  <TreeRowBox $level={0} $root>
                    <TreeIcon>
                      <Ico width="16" height="16" viewBox="0 0 16 16">
                        <path d="M1.500 4.500l2-2h11v9l-2 2h-11z" fill="#a6e6e8" stroke="#3a7a8a" />
                        <path d="M12.500 4.500l2-2v9l-2 2z" fill="#4aa0a0" />
                        <path d="M1.500 4.500h11v9" fill="none" stroke="#3a7a8a" />
                      </Ico>
                    </TreeIcon>
                    <TreeLabel $cjk={false}><T s="PRT0004.PRT" /></TreeLabel>
                  </TreeRowBox>
                  {rows.map((r, idx) => (
                    <TreeRowBox key={idx} $level={r.lvl ?? 0} $last={idx === rows.length - 1}>
                      {r.ex === "m" && <Expander />}
                      {r.ex === "p" && <ExpanderPlus />}
                      <Gutter $child={!!r.lvl} />
                      <TreeIcon><Icon n={r.i} size={20} /></TreeIcon>
                      <TreeLabel $cjk={/[^\x00-\x7f]/.test(r.t)}><T s={r.t} /></TreeLabel>
                    </TreeRowBox>
                  ))}
                </Tree>
              </TreeBox>
            </Panel>
          </LeftColumn>
          <Sash>
            <GripColumn>
              <Grip /><SChev /><SChev /><Grip />
              <GripGap />
              <Grip /><SChev /><SChev /><Grip />
            </GripColumn>
            <LineColumn>
              <SChev right /><DotLine /><SChev right />
            </LineColumn>
          </Sash>
          <Canvas><Model /></Canvas>
          <SideBar>
            <SideCol $w={41}>
              <HSep $h={11} />
              <SideRow><Tool n="wave" /></SideRow>
              <SideRow><Tool n="plane" /></SideRow>
              <SideRow><Tool n="axis" /></SideRow>
              <SideRow><Tool n="curve" /></SideRow>
              <SideRow><Tool n="points" /><DropArrow $w={12} /></SideRow>
              <SideRow><Tool n="csys" /></SideRow>
              <SideRow><Tool n="offset" /></SideRow>
              <SideRow><Tool n="chain" /></SideRow>
              <HSep $h={13} />
              <SideRow><Tool n="note" /></SideRow>
              <HSep $h={15} />
              {["uhole", "shell", "draft", "rib", "fillet", "chamfer"].map((n) => <SideRow key={n}><Tool n={n} /></SideRow>)}
            </SideCol>
            <SideCol $w={28}>
              <HSep $h={11} />
              {["extr2", "revolve", "sweep", "blend", "bound"].map((n) => <SideRow key={n}><Tool n={n} /></SideRow>)}
              <HSep $h={14} />
              {["mirror", "merge", "merge", "pattern"].map((n, i) => <SideRow key={i}><Tool n={n} /></SideRow>)}
            </SideCol>
          </SideBar>
        </Main>
        <MessageArea>
          <Messages>
            {messages.map(([ok, text], i) => (
              <MessageLine key={i}>
                <MessageIcon>{ok ? <GreenArrow /> : <BlueDot />}</MessageIcon>
                <T s={text} />
              </MessageLine>
            ))}
          </Messages>
          <ScrollTrack>
            <ScrollUp>
              <Ico width="9" height="7" viewBox="0 0 9 7"><path d="M1 5.500l3.500-3.500 3.500 3.500" fill="none" stroke="#4d6185" strokeWidth="2" /></Ico>
            </ScrollUp>
          </ScrollTrack>
        </MessageArea>
        <StatusBar>
          <StatusBlank />
          <StatusGrey />
          <Combo>
            智能
            <ComboArrow>
              <Ico width="9" height="7" viewBox="0 0 9 7"><path d="M1 1.500l3.500 3.500 3.500-3.500" fill="none" stroke="#4d6185" strokeWidth="2" /></Ico>
            </ComboArrow>
          </Combo>
          <StatusSep />
          <Light>
            <Ico width="10" height="20" viewBox="0 0 10 20">
              <rect x="3" y="0.500" width="4" height="5" fill="#c49a86" stroke="#8a6a5a" />
              <rect x="3" y="5.500" width="4" height="5" fill="#e8e080" stroke="#8a8a4a" />
              <circle cx="5" cy="14.500" r="4.500" fill="#3ab04a" stroke="#1a6a2a" />
            </Ico>
          </Light>
        </StatusBar>
      </Window>
      <Taskbar>
        <StartButton>
          <Ico width="20" height="20" viewBox="0 0 20 20">
            <path d="M3 5l6-2v6l-6 2z" fill="#d9542c" />
            <path d="M10 3l6 2v6l-6-2z" fill="#7cb83c" />
            <path d="M3 12l6-2v7l-6-2z" fill="#3c70d0" />
            <path d="M10 10l6 2v4l-6 1z" fill="#f0c030" />
          </Ico>
          开始
        </StartButton>
        <TaskGrip />
        <TaskButton $w={159} $pad={8} $gap={5}>
          <Ico width="15" height="15" viewBox="0 0 15 15">
            <rect x="1" y="1" width="13" height="13" fill="#fff" stroke="#a04040" />
            <rect x="4" y="4" width="7" height="7" fill="#dde" stroke="#124" />
          </Ico>
          <TaskLabel><T s="Pro/ENGINEER Wil..." /></TaskLabel>
        </TaskButton>
        <TaskButton $w={159} $pad={9} $gap={6} $active>
          <TaskCube />
          <TaskLabel $cjk><T s="PRT0004 (" />活动的<T s=")..." /></TaskLabel>
        </TaskButton>
        <TaskButton $w={159} $pad={9} $gap={5}>
          <TaskCube />
          <TaskLabel $cjk>信息窗口<T s=" (modite..." /></TaskLabel>
        </TaskButton>
        <TaskButton $w={159} $pad={13} $gap={2}>
          <Ico width="14" height="14" viewBox="0 0 14 14">
            <circle cx="7" cy="7" r="6" fill="#e6eef8" />
            <path d="M3 9a4.500 4.500 0 1 1 8-2H5" fill="none" stroke="#2b5fc2" strokeWidth="2" />
          </Ico>
          <TaskLabel $cjk>西游记<T s="  " />央视动画<T s="..." /></TaskLabel>
        </TaskButton>
        <Tray>
          <TrayIcons>
            <Ico width="17" height="17" viewBox="0 0 17 17"><circle cx="8.500" cy="8.500" r="8" fill="#4f9be0" stroke="#2b6fb8" /></Ico>
            <Ico width="14" height="14" viewBox="0 0 14 14"><circle cx="7" cy="5" r="3.500" fill="#1f7a5a" /><path d="M2 13l4-5 5 5z" fill="#c84a3a" /></Ico>
          </TrayIcons>
          15:06
        </Tray>
        <Watermark>
          <WatermarkCn>碧波制图网</WatermarkCn>
          <WatermarkEn>www. bbcad. com</WatermarkEn>
        </Watermark>
      </Taskbar>
      <Tooltip><T s="PRT0004 (" />活动的<T s=") - Pro/ENGINEER" /></Tooltip>
      <ImeBar>
        <ImeGrip />
        <ImeSlot $w={20}>
          <Ico width="18" height="12" viewBox="0 0 18 12">
            <rect x="0.500" y="1.500" width="17" height="10" rx="1.500" fill="#e8e8e8" stroke="#111" />
            <path d="M3 4h12M3 6.500h12M5 9h8" stroke="#333" strokeDasharray="1 1" />
          </Ico>
        </ImeSlot>
        <ImeSlot $w={22}>
          <Ico width="14" height="16" viewBox="0 0 14 16">
            <path d="M1 1h12v11H8l-2 3v-3H1z" fill="#ffffd8" stroke="#111" />
            <text x="4" y="10" fontSize="10" fontWeight="700" fontFamily="Liberation Sans" fill="#111">?</text>
          </Ico>
        </ImeSlot>
        <ImeSlot $w={22}>
          <Ico width="6" height="14" viewBox="0 0 6 14">
            <rect x="0" y="1" width="6" height="2" fill="#dde" />
            <path d="M0 10h6l-3 3z" fill="#dde" />
          </Ico>
        </ImeSlot>
      </ImeBar>
    </Desktop>
  );
}
